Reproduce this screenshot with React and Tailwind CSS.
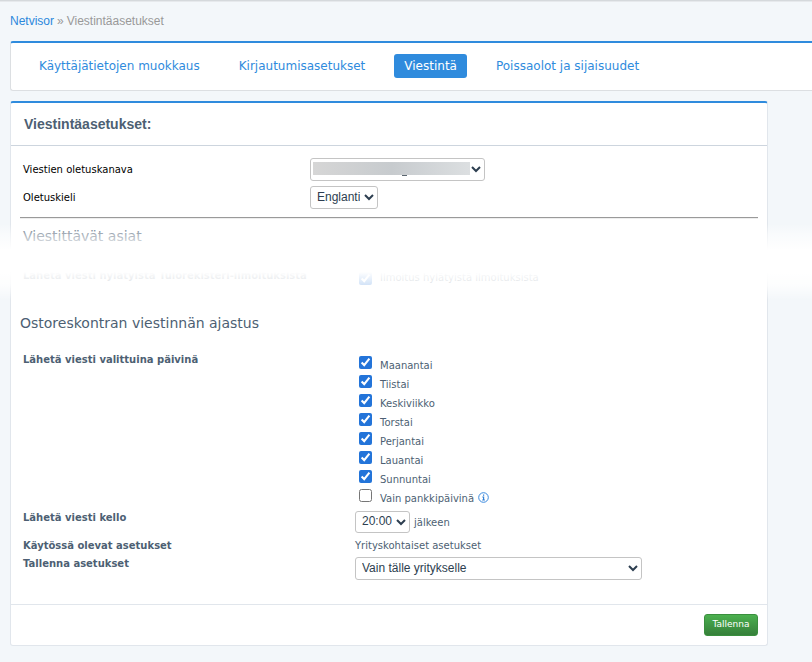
import { useState } from 'react'

const tabs = [
  { name: 'Käyttäjätietojen muokkaus', active: false },
  { name: 'Kirjautumisasetukset', active: false },
  { name: 'Viestintä', active: true },
  { name: 'Poissaolot ja sijaisuudet', active: false }
]

const dayOptions = [
  { id: 'ma', label: 'Maanantai', checked: true },
  { id: 'ti', label: 'Tiistai', checked: true },
  { id: 'ke', label: 'Keskiviikko', checked: true },
  { id: 'to', label: 'Torstai', checked: true },
  { id: 'pe', label: 'Perjantai', checked: true },
  { id: 'la', label: 'Lauantai', checked: true },
  { id: 'su', label: 'Sunnuntai', checked: true },
  { id: 'pankki', label: 'Vain pankkipäivinä', checked: false, info: true }
]

const selectStyles =
  'rounded-[3px] border border-[#c4c4c4] bg-white pt-px pr-px pb-[3px] pl-[2px] font-["Liberation_Sans",Arial,sans-serif] text-[12px] text-[#2d3e50]'

function InfoIcon() {
  return (
    <svg viewBox="0 0 11 11" className="ml-1 h-[11px] w-[11px] shrink-0" fill="none" aria-hidden="true">
      <circle cx="5.5" cy="5.5" r="4.8" stroke="#3b8ade" strokeWidth="1" />
      <path d="M5 2.5h1.2v1.2H5zM4.3 4.6h1.9v3h.7v.8H4.2v-.8H5V5.4h-.7z" fill="#2f7fd6" />
    </svg>
  )
}

function CheckRow({ id, label, checked, onChange, info, compact }) {
  return (
    <div className="flex h-[19px] items-start pl-1">
      <input
        id={id}
        type="checkbox"
        checked={checked}
        onChange={onChange}
        className="m-0 h-[13px] w-[13px] accent-[#2374d9]"
      />
      <label htmlFor={id} className={`ml-2 leading-[12px] ${compact ? 'pt-0' : 'pt-1'}`}>{label}</label>
      {info && (
        <button type="button" aria-label="Lisätietoja" className="pt-[3px]">
          <InfoIcon />
        </button>
      )}
    </div>
  )
}

export default function App() {
  const [days, setDays] = useState(dayOptions)
  const [rejected, setRejected] = useState(true)

  const toggleDay = (id) => {
    setDays(days.map((day) => (day.id === id ? { ...day, checked: !day.checked } : day)))
  }

  return (
    <div className="relative min-h-screen bg-[#f3f7fa] pb-4 font-['DejaVu_Sans',Verdana,sans-serif] text-[10px] text-[#4d5f73]">
      <div className="h-[2px] border-b border-[#e6e9ec] bg-[#d5d9dc]" />

      {/* Breadcrumb */}
      <nav className="flex h-[39px] items-center gap-[3px] pb-[2px] pl-[10px] font-['Liberation_Sans',Arial,sans-serif] text-[12px] text-[#999]">
        <a href="#" className="text-[#2b88dc]">Netvisor</a>
        <span>»</span>
        <span>Viestintäasetukset</span>
      </nav>

      {/* Tabs */}
      <nav className="ml-[10px] flex h-[50px] items-center gap-[19px] rounded-l-[3px] border border-t-2 border-r-0 border-[#dcdfe2] border-t-[#2f8bdd] bg-white pb-[2px] pl-[18px] text-[12px]">
        {tabs.map((tab) => (
          <a
            key={tab.name}
            href="#"
            className={`rounded-[3px] px-[10px] leading-6 whitespace-nowrap ${
              tab.active ? 'bg-[#2f8bdd] text-white' : 'text-[#2f8bdd]'
            }`}
          >
            {tab.name}
          </a>
        ))}
      </nav>

      <form
        onSubmit={(e) => e.preventDefault()}
        className="mt-[10px] mr-11 ml-[10px] rounded-[3px] border border-t-2 border-[#e1e6ec] border-t-[#2f8bdd] bg-white"
      >
        <h1 className="border-b border-[#cdd5de] pl-[13px] font-['Liberation_Sans',Arial,sans-serif] text-[14px] leading-[42px] font-bold">
          Viestintäasetukset:
        </h1>

        <div className="px-[9px] pt-3">
          <div className="grid grid-cols-[287px_1fr] items-center gap-y-[5px] pl-[3px] text-black">
            <label htmlFor="kanava">Viestien oletuskanava</label>
            <div className="relative w-[175px]">
              <select id="kanava" className={`block h-[23px] w-full ${selectStyles}`}>
                <option></option>
              </select>
              <span className="pointer-events-none absolute top-1 left-[3px] h-[13px] w-[157px] bg-linear-to-r from-[#d6d6d6] via-[#c7cbce] to-[#dcdfe1]" />
              <span className="pointer-events-none absolute top-[17px] left-[92px] h-px w-[5px] bg-[#5b6670]" />
            </div>
            <label htmlFor="kieli">Oletuskieli</label>
            <select id="kieli" className={`h-[23px] w-[68px] ${selectStyles}`}>
              <option>Englanti</option>
            </select>
          </div>

          <hr className="mt-2 border-t border-b border-t-[#9a9a9a] border-b-[#eee]" />

          <h2 className="pt-[7px] pl-[3px] text-[14px] leading-5">Viestittävät asiat</h2>
          <div className="mt-[26px] grid grid-cols-[332px_1fr] pl-[3px]">
            <span className="font-bold leading-[8px]">Lähetä viesti hylätyistä Tulorekisteri-ilmoituksista</span>
            <CheckRow
              id="hylatyt"
              label="Ilmoitus hylätyistä ilmoituksista"
              checked={rejected}
              onChange={() => setRejected(!rejected)}
              compact
            />
          </div>

          <h2 className="mt-[22px] text-[14px] leading-5">Ostoreskontran viestinnän ajastus</h2>

          <div className="mt-[23px] grid grid-cols-[332px_1fr] pl-[3px]">
            <span className="font-bold leading-[8px]">Lähetä viesti valittuina päivinä</span>
            <div>
              {days.map((day) => (
                <CheckRow key={day.id} {...day} onChange={() => toggleDay(day.id)} />
              ))}
            </div>

            <label htmlFor="kello" className="mt-1 font-bold leading-[12px]">Lähetä viesti kello</label>
            <div className="mt-[3px] flex h-[26px] items-start">
              <select id="kello" className={`h-[22px] w-[55px] ${selectStyles}`}>
                <option>20:00</option>
              </select>
              <span className="pt-[6px] pl-1 leading-[12px]">jälkeen</span>
            </div>

            <span className="mt-[3px] font-bold leading-[12px]">Käytössä olevat asetukset</span>
            <span className="mt-[3px] leading-[12px]">Yrityskohtaiset asetukset</span>

            <label htmlFor="tallenna" className="mt-[6px] font-bold leading-[12px]">Tallenna asetukset</label>
            <select id="tallenna" className={`mt-[5px] h-[23px] w-[287px] ${selectStyles}`}>
              <option>Vain tälle yritykselle</option>
            </select>
          </div>
        </div>

        <div className="mt-6 flex justify-end border-t border-[#e1e6ec] px-[9px] py-[9px]">
          <button
            type="submit"
            className="h-[22px] w-[54px] rounded-[3px] border border-[#3a8f3e] bg-linear-to-b from-[#4bb04f] to-[#36803a] text-[9px] text-white"
          >
            Tallenna
          </button>
        </div>
      </form>

      <div className="pointer-events-none absolute inset-x-0 top-[224px] h-[76px] bg-[linear-gradient(to_bottom,rgba(255,255,255,0)_0px,rgba(255,255,255,0.5)_10px,rgba(255,255,255,1)_26px,rgba(255,255,255,1)_48px,rgba(255,255,255,0.8)_61px,rgba(255,255,255,0)_76px)]" />
    </div>
  )
}
